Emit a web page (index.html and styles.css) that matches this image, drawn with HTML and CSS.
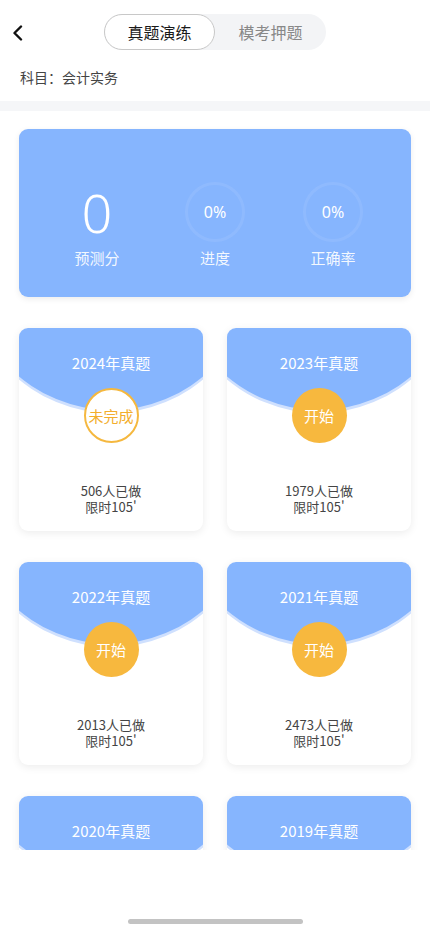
FILE: index.html
```html
<!DOCTYPE html>
<html lang="zh-CN">
  <head>
    <meta charset="UTF-8" />
    <meta name="viewport" content="width=device-width, initial-scale=1.0" />
    <title>真题演练</title>
    <link rel="stylesheet" href="styles.css">
  </head>
  <body>
    <div class="page">
      <header class="topbar">
        <a class="back">
          <svg width="12" height="16" viewBox="0 0 12 16"><path d="M9 1.5 L2.5 8 L9 14.5" fill="none" stroke="#111" stroke-width="2.4" stroke-linecap="round" stroke-linejoin="round"/></svg>
        </a>
        <div class="tabs">
          <span class="tab active">真题演练</span>
          <span class="tab">模考押题</span>
        </div>
      </header>
      <div class="subject">科目：会计实务</div>
      <div class="band"></div>

      <main class="scroll">
        <section class="stats">
          <div class="stat">
            <div class="score">0</div>
            <div class="stat-label">预测分</div>
          </div>
          <div class="stat">
            <div class="ring">0%</div>
            <div class="stat-label">进度</div>
          </div>
          <div class="stat">
            <div class="ring">0%</div>
            <div class="stat-label">正确率</div>
          </div>
        </section>

        <section class="papers">
          <div class="paper">
            <div class="paper-head">
              <div class="paper-title">2024年真题</div>
              <div class="paper-btn todo">未完成</div>
            </div>
            <div class="paper-info">506人已做<br>限时105'</div>
          </div>
          <div class="paper">
            <div class="paper-head">
              <div class="paper-title">2023年真题</div>
              <div class="paper-btn">开始</div>
            </div>
            <div class="paper-info">1979人已做<br>限时105'</div>
          </div>
          <div class="paper">
            <div class="paper-head">
              <div class="paper-title">2022年真题</div>
              <div class="paper-btn">开始</div>
            </div>
            <div class="paper-info">2013人已做<br>限时105'</div>
          </div>
          <div class="paper">
            <div class="paper-head">
              <div class="paper-title">2021年真题</div>
              <div class="paper-btn">开始</div>
            </div>
            <div class="paper-info">2473人已做<br>限时105'</div>
          </div>
          <div class="paper">
            <div class="paper-head">
              <div class="paper-title">2020年真题</div>
              <div class="paper-btn">开始</div>
            </div>
            <div class="paper-info">1862人已做<br>限时105'</div>
          </div>
          <div class="paper">
            <div class="paper-head">
              <div class="paper-title">2019年真题</div>
              <div class="paper-btn">开始</div>
            </div>
            <div class="paper-info">1540人已做<br>限时105'</div>
          </div>
        </section>
      </main>

      <footer class="home-bar"><span></span></footer>
    </div>
  </body>
</html>
```

FILE: styles.css
```css
* {
  box-sizing: border-box;
}
html, body {
  margin: 0;
  padding: 0;
  background: #fff;
}
body {
  font-family: "Noto Sans CJK SC", "Noto Sans", sans-serif;
  color: #333;
}
.page {
  width: 430px;
  height: 929px;
  display: flex;
  flex-direction: column;
  overflow: hidden;
}

/* 顶部栏 */
.topbar {
  position: relative;
  height: 64px;
  display: flex;
  align-items: center;
  justify-content: center;
}
.back {
  position: absolute;
  left: 12px;
  top: 25px;
  width: 14px;
  height: 16px;
}
.back svg {
  display: block;
}
.tabs {
  display: flex;
  width: 222px;
  height: 36px;
  border-radius: 18px;
  background: #f3f4f6;
}
.tab {
  width: 111px;
  line-height: 36px;
  text-align: center;
  font-size: 16px;
  color: #888;
}
.tab.active {
  background: #fff;
  border: 1px solid #c8c8c8;
  border-radius: 18px;
  line-height: 34px;
  color: #1a1a1a;
}

.subject {
  padding: 3px 20px 14px;
  font-size: 14px;
  line-height: 20px;
  color: #444;
}
.band {
  height: 10px;
  background: #f5f6f8;
}

/* 滚动区 */
.scroll {
  height: 739px;
  overflow: hidden;
  padding: 18px 19px 0;
}

/* 统计卡片 */
.stats {
  height: 168px;
  border-radius: 9px;
  background: #86b5fe;
  box-shadow: 0 2px 6px rgba(0, 0, 0, 0.08);
  display: flex;
  justify-content: center;
  gap: 58px;
  padding-top: 53px;
}
.stat {
  width: 60px;
  display: flex;
  flex-direction: column;
  align-items: center;
}
.score {
  height: 60px;
  line-height: 60px;
  font-size: 54px;
  font-weight: 300;
  color: #fff;
  font-family: "Noto Sans", sans-serif;
}
.ring {
  width: 60px;
  height: 60px;
  border-radius: 50%;
  border: 3px solid rgba(255, 255, 255, 0.08);
  display: flex;
  align-items: center;
  justify-content: center;
  font-size: 16px;
  color: #fff;
  font-family: "Noto Sans", sans-serif;
}
.stat-label {
  margin-top: 6px;
  white-space: nowrap;
  font-size: 15px;
  line-height: 20px;
  color: rgba(255, 255, 255, 0.92);
}

/* 试卷卡片 */
.papers {
  margin-top: 31px;
  display: grid;
  grid-template-columns: 1fr 1fr;
  column-gap: 24px;
  row-gap: 31px;
}
.paper {
  position: relative;
  height: 203px;
  border-radius: 9px;
  overflow: hidden;
  background: #fff;
  box-shadow: 0 2px 8px rgba(0, 0, 0, 0.08);
  text-align: center;
}
.paper-head {
  position: relative;
  display: flex;
  flex-direction: column;
  align-items: center;
  padding-top: 25px;
}
.paper-head::before {
  content: "";
  position: absolute;
  left: 50%;
  top: -204px;
  width: 286px;
  height: 286px;
  margin-left: -143px;
  border-radius: 50%;
  background: #86b5fe;
  box-shadow: 0 3px 0 #cfe0fe;
}
.paper-title {
  position: relative;
  font-size: 15px;
  line-height: 20px;
  color: #fff;
}
.paper-btn {
  position: relative;
  margin-top: 15px;
  width: 55px;
  height: 55px;
  border-radius: 50%;
  background: #f7b83e;
  color: #fff;
  font-size: 15px;
  display: flex;
  align-items: center;
  justify-content: center;
}
.paper-btn.todo {
  background: #fff;
  border: 2px solid #f5b83f;
  color: #f3ae2c;
}
.paper-info {
  margin-top: 40px;
  font-size: 13px;
  line-height: 16px;
  color: #444;
}

/* 底部指示条 */
.home-bar {
  flex: 1;
  display: flex;
  justify-content: center;
  padding-top: 69px;
}
.home-bar span {
  width: 175px;
  height: 5px;
  border-radius: 3px;
  background: #c3c3c3;
}
```
